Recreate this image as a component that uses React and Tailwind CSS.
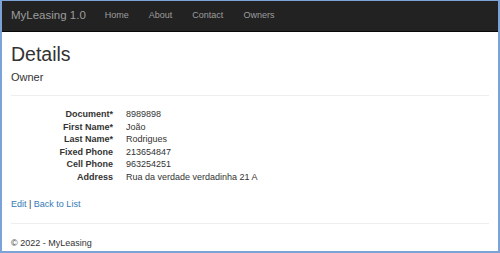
import React from 'react';

const owner = [
    { label: 'Document*', value: '8989898' },
    { label: 'First Name*', value: 'João' },
    { label: 'Last Name*', value: 'Rodrigues' },
    { label: 'Fixed Phone', value: '213654847' },
    { label: 'Cell Phone', value: '963254251' },
    { label: 'Address', value: 'Rua da verdade verdadinha 21 A' },
];

const links = ['Home', 'About', 'Contact', 'Owners'];

export default function App() {
    return (
        <div
            className="w-[500px] h-[253px] overflow-hidden bg-white border-[#7ba3d8] border-t border-l-2 border-r-2 border-b-2 text-[#333]"
            style={{ fontFamily: '"Liberation Sans", Arial, sans-serif' }}
        >
            {/* navbar */}
            <div className="h-[31px] bg-[#222] border-b border-[#080808] flex items-center px-[9px]">
                <span className="text-[11.5px] text-[#9d9d9d] pr-[9px]">MyLeasing 1.0</span>
                {links.map(link => (
                    <span key={link} className="text-[9px] text-[#9d9d9d] px-[10px]">{link}</span>
                ))}
            </div>

            <div className="px-[9px]">
                <h2 className="mt-[11px] text-[19.5px] leading-[22px]">Details</h2>
                <h4 className="mt-[6px] text-[11px] leading-[13px]">Owner</h4>
                <hr className="mt-[11px] border-[#eee]" />

                <dl className="mt-[12px] text-[9px] leading-[12.6px]">
                    {owner.map(row => (
                        <div key={row.label} className="flex">
                            <dt className="w-[102px] text-right font-bold">{row.label}</dt>
                            <dd className="ml-[13px]">{row.value}</dd>
                        </div>
                    ))}
                </dl>

                <div className="mt-[14px] text-[9px] leading-[13px]">
                    <span className="text-[#337ab7]">Edit</span> | <span className="text-[#337ab7]">Back to List</span>
                </div>

                <hr className="mt-[12px] border-[#eee]" />
                <footer className="mt-[13px] text-[9px] leading-[13px]">© 2022 - MyLeasing</footer>
            </div>
        </div>
    );
}
